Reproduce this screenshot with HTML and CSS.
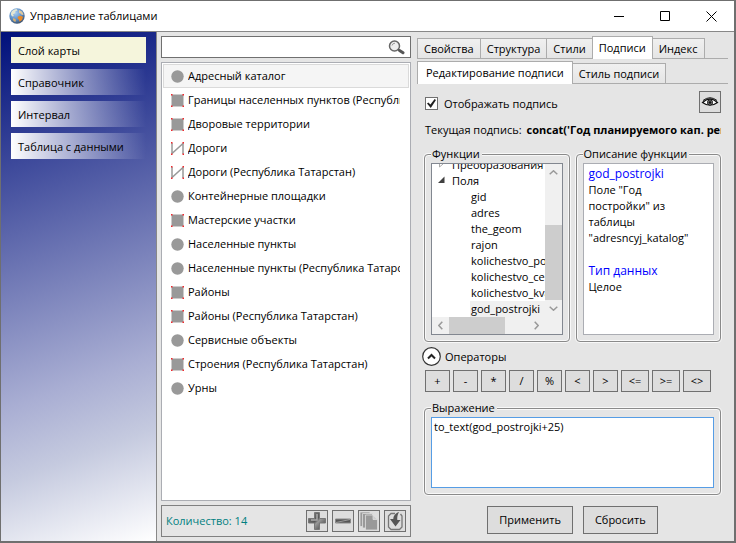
FILE: index.html
```html
<!DOCTYPE html>
<html lang="ru">
<head>
<meta charset="utf-8">
<title>Управление таблицами</title>
<link rel="stylesheet" href="styles.css">
</head>
<body>
<svg class="defs" width="0" height="0" aria-hidden="true">
  <symbol id="point" viewBox="0 0 13 13"><circle cx="6.5" cy="6.5" r="6.2" fill="#999"/></symbol>
  <symbol id="polygon" viewBox="0 0 13 13"><path d="M.5.5h12v12H.5z" fill="#999"/><path d="M0 0h1.500v1.500H0zM11.500 0h1.500v1.500h-1.500zM0 11.500h1.500v1.500H0zM11.500 11.500h1.500v1.500h-1.500z" fill="#f0282d"/></symbol>
  <symbol id="line" viewBox="0 0 13 13"><path d="M1 1v10.500L12 1.500v10.500" fill="none" stroke="#999" stroke-width="1.500"/><path d="M0 0h1.500v1.500H0zM11.500 0h1.500v1.500h-1.500zM0 11.500h1.500v1.500H0zM11.500 11.500h1.500v1.500h-1.500z" fill="#f0282d"/></symbol>
</svg>
<header class="titlebar">
  <svg class="globe" viewBox="0 0 16 16" aria-hidden="true">
    <defs><radialGradient id="sea" cx=".4" cy=".3" r=".75"><stop offset="0" stop-color="#a9cdf0"/><stop offset=".6" stop-color="#5a8cc4"/><stop offset="1" stop-color="#3c4a60"/></radialGradient></defs>
    <circle cx="8" cy="8" r="7.700" fill="url(#sea)"/>
    <path d="M2 5C3 2.500 5 1.300 7.500 1l1 1.500-2 .8-.5 2-2 1.200L5 8l-1.500.5L2 7z" fill="#e3e6d2"/>
    <path d="M10 2l3 1.500 1.700 3L13 7l-1.500-1.500L10 5z" fill="#dfc9a0"/>
    <path d="M9 8.500l3-.7 2 1.200-1 3-2.500 1.800-.7-2.300L8.500 10z" fill="#e88a28"/>
    <path d="M4 10l2.500 1 .5 2-1 1-2-1.700z" fill="#d5b070"/>
  </svg>
  <h1>Управление таблицами</h1>
  <div class="winbuttons">
    <button aria-label="Свернуть"><svg viewBox="0 0 11 11"><path d="M0 5.500h10"/></svg></button>
    <button aria-label="Развернуть"><svg viewBox="0 0 11 11"><path d="M.5.5h9v9h-9z"/></svg></button>
    <button aria-label="Закрыть"><svg viewBox="0 0 11 11"><path d="M.5.5l10 10M10.500.5l-10 10"/></svg></button>
  </div>
</header>
<main class="workspace">
  <nav class="sidebar">
    <button class="active">Слой карты</button>
    <button>Справочник</button>
    <button>Интервал</button>
    <button>Таблица с данными</button>
  </nav>
  <section class="layers">
    <div class="search">
      <input type="text" aria-label="Поиск">
      <svg viewBox="0 0 17 15" aria-hidden="true"><circle cx="6.500" cy="6" r="5" fill="#eee" stroke="#666" stroke-width="1.500"/><path d="M4 5.500a3 3 0 0 1 3-2.300" fill="none" stroke="#999"/><path d="M10 9.500l1.500 1" stroke="#555" stroke-width="1.500"/><path d="M11.500 10.500l3.500 2.300" stroke="#555" stroke-width="3" stroke-linecap="round"/></svg>
    </div>
    <ul class="list">
      <li class="selected"><svg><use href="#point"/></svg><span>Адресный каталог</span></li>
      <li><svg><use href="#polygon"/></svg><span>Границы населенных пунктов (Республика Татарстан)</span></li>
      <li><svg><use href="#polygon"/></svg><span>Дворовые территории</span></li>
      <li><svg><use href="#line"/></svg><span>Дороги</span></li>
      <li><svg><use href="#line"/></svg><span>Дороги (Республика Татарстан)</span></li>
      <li><svg><use href="#point"/></svg><span>Контейнерные площадки</span></li>
      <li><svg><use href="#polygon"/></svg><span>Мастерские участки</span></li>
      <li><svg><use href="#point"/></svg><span>Населенные пункты</span></li>
      <li><svg><use href="#point"/></svg><span>Населенные пункты (Республика Татарстан)</span></li>
      <li><svg><use href="#polygon"/></svg><span>Районы</span></li>
      <li><svg><use href="#polygon"/></svg><span>Районы (Республика Татарстан)</span></li>
      <li><svg><use href="#point"/></svg><span>Сервисные объекты</span></li>
      <li><svg><use href="#polygon"/></svg><span>Строения (Республика Татарстан)</span></li>
      <li><svg><use href="#point"/></svg><span>Урны</span></li>
    </ul>
    <footer class="toolbar">
      <span class="count">Количество: 14</span>
      <button class="icon" aria-label="Добавить"><svg viewBox="0 0 20 20"><defs><linearGradient id="metal" x2="1" y2="1"><stop offset="0" stop-color="#888"/><stop offset=".45" stop-color="#555"/><stop offset=".55" stop-color="#999"/><stop offset="1" stop-color="#333"/></linearGradient></defs><path d="M7.500 1.500h5v6h6v4.500h-6v6.500h-5V12h-6V7.500h6z" fill="url(#metal)" stroke="#777"/><path d="M10 3v6H4" fill="none" stroke="#aaa" stroke-width="1.500"/></svg></button>
      <button class="icon" aria-label="Удалить"><svg viewBox="0 0 20 20"><path d="M2.500 8h15v4h-15z" fill="#555" stroke="#888"/><path d="M3 11.500l7-1.500 7-1.500" stroke="#999" fill="none"/></svg></button>
      <button class="icon" aria-label="Копировать"><svg viewBox="0 0 20 20"><g fill="#999" stroke="#ddd" stroke-width=".8"><path d="M1 1h10v14.500H1z"/><path d="M3.500 2.500h10V17h-10z"/><path d="M6.500 4h7.500l4.500 4.500V19h-12z"/><path d="M14 4v4.500h4.500z" fill="#ccc"/></g></svg></button>
      <button class="icon" aria-label="Импорт"><svg viewBox="0 0 20 20"><path d="M10 2.500H6L3.500 5v11L6 18.500h8.500L17 16V5l-1.500-2" fill="none" stroke="#777" stroke-width="1.300"/><path d="M14 1c-4 1.500-5.500 4-5.700 7H5l5.500 7.500L15.500 9h-3.200c-.3-3 .2-5 1.700-8z" fill="#555"/></svg></button>
    </footer>
  </section>
  <section class="details">
    <div class="tabs" role="tablist">
      <button role="tab">Свойства</button><button role="tab">Структура</button><button role="tab">Стили</button><button role="tab" class="active" aria-selected="true">Подписи</button><button role="tab">Индекс</button>
    </div>
    <div class="tabs sub" role="tablist">
      <button role="tab" class="active" aria-selected="true">Редактирование подписи</button><button role="tab">Стиль подписи</button>
    </div>
    <div class="panel">
      <div class="showrow">
        <label><input type="checkbox" checked>Отображать подпись</label>
        <button class="icon" aria-label="Просмотр"><svg viewBox="0 0 20 20"><path d="M2.500 10.500Q10 3.500 17.500 10.500Q10 16 2.500 10.500z" fill="#fff" stroke="#111" stroke-width="1.200"/><path d="M3 8.500Q10 3 17 8.500" fill="none" stroke="#111"/><circle cx="10" cy="10.500" r="2.500" fill="#111" stroke="#111"/><circle cx="10" cy="10.500" r="1.800" fill="none" stroke="#999" stroke-width=".7"/></svg></button>
      </div>
      <p class="current"><span>Текущая подпись:</span><b>concat('Год планируемого кап. ремонта: ')</b></p>
      <div class="groups">
        <fieldset>
          <legend>Функции</legend>
          <div class="box treebox">
            <ul class="tree">
              <li class="node"><svg viewBox="0 0 7 8"><path d="M1.500 1l3.500 3-3.500 3z" fill="#fff" stroke="#aaa"/></svg>Преобразования</li>
              <li class="node"><svg viewBox="0 0 7 8"><path d="M6.500.5V7H0z" fill="#404040"/></svg>Поля</li>
              <li class="leaf"><span>gid</span></li>
              <li class="leaf"><span>adres</span></li>
              <li class="leaf"><span>the_geom</span></li>
              <li class="leaf"><span>rajon</span></li>
              <li class="leaf"><span>kolichestvo_podjezdov</span></li>
              <li class="leaf"><span>kolichestvo_cementa</span></li>
              <li class="leaf"><span>kolichestvo_kvartir</span></li>
              <li class="leaf picked"><span>god_postrojki</span></li>
            </ul>
            <div class="vbar" aria-hidden="true"><svg viewBox="0 0 9 5"><path d="M.7 4.300l3.800-3.500 3.800 3.500"/></svg><i></i><svg viewBox="0 0 9 5"><path d="M.7.7l3.800 3.500L8.300.7"/></svg></div>
            <div class="hbar" aria-hidden="true"><svg viewBox="0 0 5 9"><path d="M4.300.7L.8 4.500l3.500 3.800"/></svg><i></i><svg viewBox="0 0 5 9"><path d="M.7.7l3.500 3.800L.7 8.300"/></svg></div>
          </div>
        </fieldset>
        <fieldset>
          <legend>Описание функции</legend>
          <div class="box help">
            <h2>god_postrojki</h2>
            <p>Поле "Год<br>постройки" из таблицы "adresncyj_katalog"</p>
            <h2 class="type">Тип данных</h2>
            <p>Целое</p>
          </div>
        </fieldset>
      </div>
      <div class="opshead">
        <button class="expander" aria-label="Свернуть операторы"><svg viewBox="0 0 19 19"><circle cx="9.500" cy="9.500" r="8.800" fill="#fff" stroke="#333" stroke-width="1.200"/><path d="M6 11.500l3.500-3.500 3.500 3.500" fill="none" stroke="#222" stroke-width="2"/></svg></button>
        <span>Операторы</span>
      </div>
      <div class="ops">
        <button>+</button><button>-</button><button>*</button><button>/</button><button>%</button><button>&lt;</button><button>&gt;</button><button class="wide">&lt;=</button><button class="wide">&gt;=</button><button class="wide">&lt;&gt;</button>
      </div>
      <fieldset class="expression">
        <legend><label for="expr">Выражение</label></legend>
        <textarea id="expr" spellcheck="false">to_text(god_postrojki+25)</textarea>
      </fieldset>
      <div class="actions"><button>Применить</button><button>Сбросить</button></div>
    </div>
  </section>
</main>
</body>
</html>
```
FILE: styles.css
```css
* { box-sizing: border-box; margin: 0; padding: 0; }
body {
  min-height: 100vh;
  display: flex;
  flex-direction: column;
  border: 1px solid #6f6f6f;
  border-width: 1px 2px 2px 1px;
  background: #e5e5e5;
  color: #000;
  font: 11px/16px "Open Sans", "Noto Sans", sans-serif;
  overflow: hidden;
}
button, input, textarea { font: inherit; color: inherit; }
ul { list-style: none; }
svg { display: block; flex: none; }
.defs { position: absolute; }

.titlebar {
  display: flex;
  align-items: center;
  height: 30px;
  padding-left: 8px;
  background: #fff;
}
.globe { width: 16px; height: 16px; }
.titlebar h1 { margin-left: 5px; font-size: 11px; font-weight: 400; }
.winbuttons { display: flex; margin-left: auto; }
.winbuttons button {
  display: grid;
  place-items: center;
  width: 46px;
  height: 29px;
  border: 0;
  background: none;
}
.winbuttons svg { width: 11px; height: 11px; fill: none; stroke: #000; }

.workspace {
  flex: 1;
  display: grid;
  grid-template-columns: 156px minmax(0, 254fr) minmax(0, 323fr);
  border-top: 1px solid #888;
}

.sidebar {
  display: flex;
  flex-direction: column;
  gap: 6px;
  padding: 5px 10px 0 10px;
  border-right: 1px solid #888;
  background: linear-gradient(160deg, #00107b, #a9aed3 67%, #c5cadf 80%, #fff);
}
.sidebar button {
  height: 26px;
  padding: 2px 0 0 7px;
  border: 0;
  text-align: left;
  background: linear-gradient(90deg, #fff, rgba(255, 255, 255, 0));
}
.sidebar .active { background: #f5f5dc; }

.layers {
  display: flex;
  flex-direction: column;
  gap: 4px;
  padding: 4px 0 4px 4px;
}
.search {
  display: flex;
  align-items: center;
  height: 22px;
  padding-right: 5px;
  border: 1px solid #707070;
  background: #fff;
}
.search input { flex: 1; min-width: 0; border: 0; outline: 0; padding: 0 4px; background: none; }
.search svg { width: 17px; height: 15px; }
.list { flex: 1; padding: 1px; border: 1px solid #abadb3; background: #fff; }
.list li {
  display: flex;
  align-items: center;
  gap: 4px;
  height: 24px;
  padding: 0 8px 0 7px;
  border: 1px solid transparent;
}
.list .selected { border-color: #dadada; background: #f5f5f5; }
.list svg { width: 13px; height: 13px; }
.list span { flex: 1; overflow: hidden; white-space: nowrap; }
.toolbar {
  display: flex;
  align-items: center;
  gap: 4px;
  height: 32px;
  padding: 0 4px;
  border: 1px solid #808080;
}
.count { margin-right: auto; color: #008080; }
.icon {
  display: grid;
  place-items: center;
  width: 22px;
  height: 22px;
  border: 1px solid #707070;
  background: #dddddd;
}
.icon svg { width: 20px; height: 20px; }

.details { padding: 4px 6px 0 6px; }
.tabs {
  display: flex;
  align-items: flex-end;
  height: 23px;
  border-bottom: 1px solid #acacac;
}
.tabs button {
  height: 20px;
  padding: 0 6px;
  border: 1px solid #acacac;
  border-bottom: 0;
  margin-right: -1px;
  white-space: nowrap;
  background: linear-gradient(#f0f0f0, #e5e5e5);
}
.tabs .active { height: 23px; margin-bottom: -1px; background: #fff; z-index: 1; }
.sub { margin-top: 2px; }
.sub .active { padding: 0 8px; }

.panel { padding: 7px 7px 0 7px; }
.showrow, .current, .ops { padding-left: 1px; }
.showrow { display: flex; align-items: center; justify-content: space-between; }
.showrow label { display: flex; align-items: center; gap: 6px; padding-top: 3px; }
.showrow input {
  appearance: none;
  width: 13px;
  height: 13px;
  border: 1px solid #707070;
  background: #fff;
  display: grid;
  place-items: center;
}
.showrow input:checked::before {
  content: "";
  width: 9px;
  height: 9px;
  background: #212121;
  clip-path: polygon(0 50%, 15% 38%, 38% 62%, 85% 0, 100% 10%, 42% 100%);
}
.current { display: flex; gap: 5px; margin-top: 9px; overflow: hidden; white-space: nowrap; }

.groups { display: grid; grid-template-columns: minmax(0, 1fr) minmax(0, 1fr); gap: 6px; margin-top: 8px; }
fieldset {
  min-width: 0;
  padding: 1px 6px 6px;
  border: 1px solid #8a8a8a;
  border-radius: 4px;
  box-shadow: 0 0 0 1px #f8f8f8, inset 0 0 0 1px #f8f8f8;
}
legend { padding: 0 2px 0 1px; background: #e5e5e5; white-space: nowrap; }
.box { height: 172px; border: 1px solid #abadb3; background: #fff; }
.treebox {
  display: grid;
  grid-template: minmax(0, 1fr) 17px / minmax(0, 1fr) 17px;
  border-color: #828790;
}
.tree { display: flex; flex-direction: column; justify-content: flex-end; overflow: hidden; }
.tree li { display: flex; flex: none; height: 16px; white-space: nowrap; }
.node { padding-left: 6px; gap: 7px; }
.node svg { width: 7px; height: 8px; margin-top: 3px; }
.leaf { padding-left: 38px; }
.leaf span { flex: 1; padding-left: 1px; }
.picked span { background: #f0f0f0; }
.vbar, .hbar { display: flex; align-items: center; background: #f0f0f0; }
.vbar { flex-direction: column; padding: 6px 0; }
.vbar i { width: 17px; height: 75px; margin: auto 0 6px; background: #cdcdcd; }
.vbar svg { width: 9px; height: 5px; }
.hbar { grid-column: 1 / 3; padding: 0 23px 0 6px; }
.hbar i { width: 56px; height: 17px; margin: 0 auto 0 6px; background: #cdcdcd; }
.hbar svg { width: 5px; height: 9px; }
.vbar svg, .hbar svg { fill: none; stroke: #999; stroke-width: 1.500px; }
.help { padding: 2px 5px; }
.help h2 { font-size: 12px; line-height: 16px; font-weight: 400; color: #0000ff; }
.help .type { margin-top: 17px; }

.opshead { display: flex; align-items: center; gap: 4px; margin: 5px 0 0 -2px; }
.expander { border: 0; background: none; }
.expander svg { width: 19px; height: 19px; }
.ops { display: flex; gap: 3px; margin-top: 4px; }
.ops button, .actions button { border: 1px solid #707070; background: #ddd; }
.ops button { width: 25px; height: 22px; line-height: 18px; }
.ops .wide { width: 28px; }
.expression { margin-top: 8px; }
.expression textarea {
  display: block;
  width: 100%;
  height: 71px;
  padding: 1px 2px;
  border: 1px solid #569de5;
  outline: 0;
  resize: none;
  background: #fff;
}
.actions { display: flex; justify-content: center; gap: 10px; margin-top: 11px; }
.actions button { height: 28px; padding: 0 11px; }
```
